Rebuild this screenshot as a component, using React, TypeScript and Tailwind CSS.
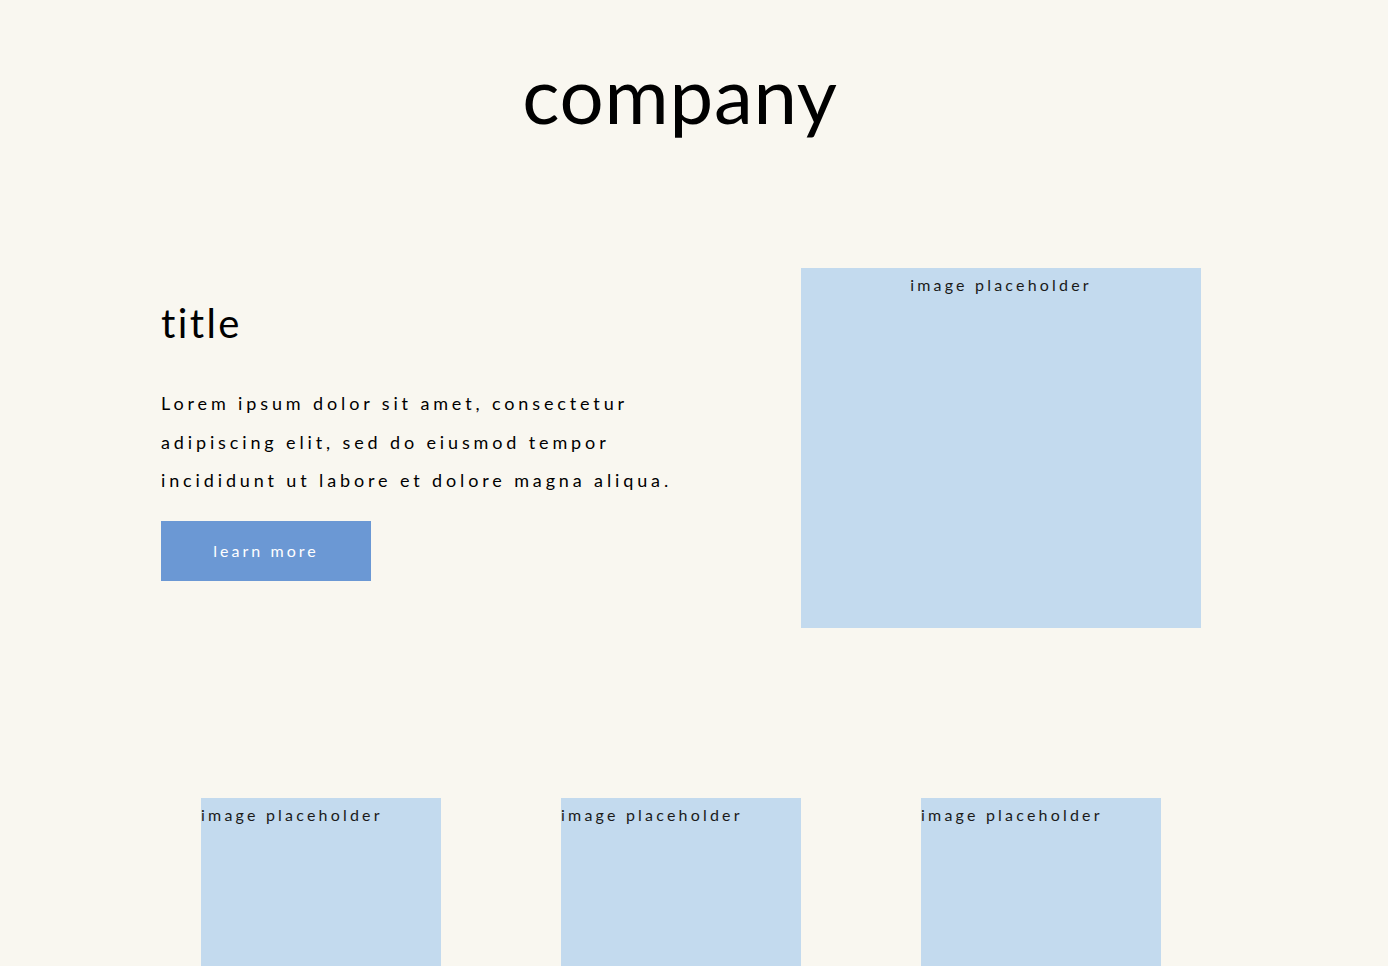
import React from "react";

const font = { fontFamily: '"Lato", "Liberation Sans", sans-serif' };

function Placeholder({ className, center }: { className: string; center?: boolean }) {
    return (
        <div className={`bg-[#c3daee] ${className}`}>
            <div className={`pt-[5px] text-[16px] tracking-[0.2em] text-[#1a1a1a] ${center ? "text-center" : ""}`}>
                image placeholder
            </div>
        </div>
    );
}

export default function App() {
    return (
        <div className="min-h-[966px] overflow-hidden bg-[#f9f7f0] text-black" style={font}>
            <header className="flex justify-center pt-[44px]">
                <h1 className="mr-[28px] text-[78px] leading-[100px] tracking-[0.01em]">company</h1>
            </header>

            <section className="mt-[124px] ml-[161px] flex w-[1040px] items-start justify-between">
                <div className="flex w-[520px] flex-col items-start pt-[31px]">
                    <h2 className="text-[40px] leading-[48px] tracking-[0.06em]">title</h2>
                    <p className="mt-[37px] text-[18px] leading-[38.5px] tracking-[0.215em]">
                        Lorem ipsum dolor sit amet, consectetur adipiscing elit, sed do eiusmod tempor incididunt ut
                        labore et dolore magna aliqua.
                    </p>
                    <button className="mt-[21px] h-[60px] w-[210px] bg-[#6b98d4] text-[16px] tracking-[0.19em] text-white">
                        learn more
                    </button>
                </div>
                <Placeholder className="h-[360px] w-[400px]" center />
            </section>

            <section className="mt-[170px] ml-[201px] flex w-[960px] gap-[120px]">
                <Placeholder className="h-[240px] w-[240px]" />
                <Placeholder className="h-[240px] w-[240px]" />
                <Placeholder className="h-[240px] w-[240px]" />
            </section>
        </div>
    );
}
